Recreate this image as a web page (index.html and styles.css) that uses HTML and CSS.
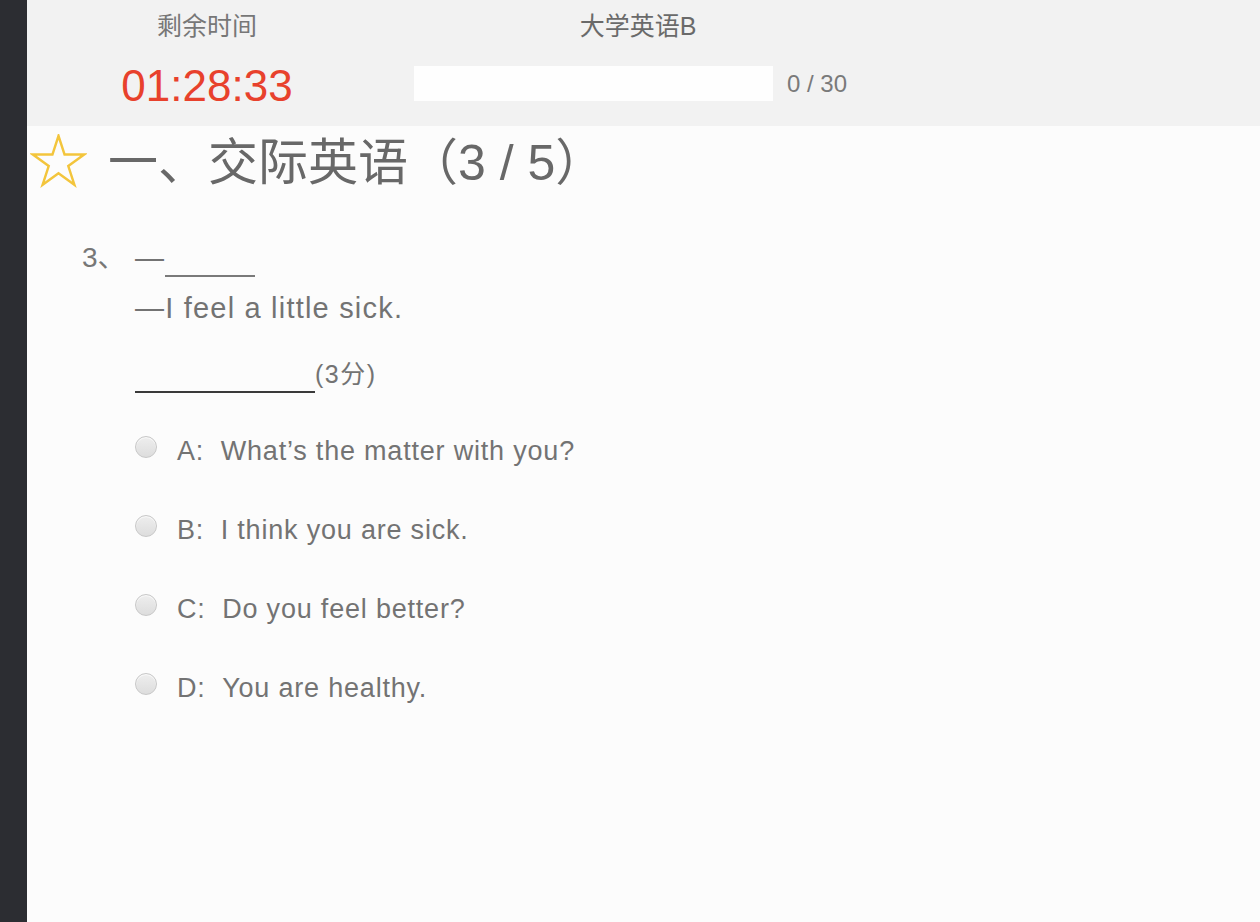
FILE: index.html
```html
<!DOCTYPE html>
<html lang="zh-CN">
<head>
<meta charset="utf-8">
<title>大学英语B</title>
<link rel="stylesheet" href="styles.css">
</head>
<body>
<div class="app">
  <aside class="sidebar"></aside>
  <main class="main">
    <header class="topbar">
      <div class="col col-timer">
        <div class="label">剩余时间</div>
        <div class="timer">01:28:33</div>
      </div>
      <div class="col col-title">
        <div class="label title">大学英语B</div>
        <div class="progress-row">
          <div class="progress"></div>
          <span class="count">0 / 30</span>
        </div>
      </div>
    </header>

    <section class="section">
      <h1 class="section-head">
        <svg class="star" width="57" height="54" viewBox="0 0 60 56" aria-hidden="true">
          <polygon points="30,1.6 36.38,21.22 57.01,21.22 40.32,33.35 46.69,52.98 30,40.85 13.31,52.98 19.68,33.35 2.99,21.22 23.62,21.22" fill="none" stroke="#f3c53c" stroke-width="2.6" stroke-linejoin="miter"/>
        </svg>
        <span class="head-text">一、交际英语（3 / 5）</span>
      </h1>

      <div class="question">
        <div class="q-num">3、</div>
        <div class="q-body">
          <div class="q-line">—<span class="blank-short"></span></div>
          <div class="q-line">—I feel a little sick.</div>
          <div class="answer-line">
            <div class="blank-long"></div>
            <span class="score">(3分)</span>
          </div>
          <ul class="options">
            <li class="option"><span class="radio"></span><span class="opt-text">A:&nbsp;&nbsp;What’s the matter with you?</span></li>
            <li class="option"><span class="radio"></span><span class="opt-text">B:&nbsp;&nbsp;I think you are sick.</span></li>
            <li class="option"><span class="radio"></span><span class="opt-text">C:&nbsp;&nbsp;Do you feel better?</span></li>
            <li class="option"><span class="radio"></span><span class="opt-text">D:&nbsp;&nbsp;You are healthy.</span></li>
          </ul>
        </div>
      </div>
    </section>
  </main>
</div>
</body>
</html>
```

FILE: styles.css
```css
* { box-sizing: border-box; }

html, body {
  margin: 0;
  padding: 0;
  height: 100%;
}

body {
  font-family: "Liberation Sans", "Noto Sans CJK SC", sans-serif;
  background: #fcfcfc;
  color: #737373;
}

.app {
  display: flex;
  min-height: 100vh;
}

.sidebar {
  width: 27px;
  flex: 0 0 27px;
  background: #2c2d32;
}

.main {
  flex: 1;
  background: #fcfcfc;
}

/* header */
.topbar {
  height: 126px;
  background: #f2f2f2;
  display: grid;
  grid-template-columns: 360px 448px;
  column-gap: 27px;
  padding-top: 11px;
}

.col {
  display: flex;
  flex-direction: column;
  align-items: center;
}

.label {
  font-size: 25px;
  line-height: 30px;
  color: #777;
}

.title {
  color: #6a6a6a;
}

.timer {
  margin-top: 20px;
  font-size: 44px;
  line-height: 50px;
  color: #e8412c;
}

.col-title {
  align-items: stretch;
}

.col-title .title {
  text-align: center;
}

.progress-row {
  display: flex;
  align-items: center;
  gap: 14px;
  margin-top: 25px;
}

.progress {
  width: 359px;
  height: 35px;
  background: #fefefe;
}

.count {
  font-size: 24px;
  line-height: 30px;
  color: #7a7a7a;
}

/* section */
.section {
  padding-top: 7px;
}

.section-head {
  margin: 0;
  display: flex;
  align-items: flex-start;
  gap: 21px;
  padding-left: 3px;
  height: 60px;
  font-weight: normal;
}

.star {
  display: block;
  flex: 0 0 57px;
  margin-top: 1px;
}

.head-text {
  font-size: 50px;
  line-height: 60px;
  color: #686868;
}

.question {
  display: grid;
  grid-template-columns: 53px 1fr;
  margin-left: 55px;
  margin-top: 40px;
  font-size: 29px;
  letter-spacing: 1.2px;
}

.q-num {
  font-size: 28px;
  line-height: 50px;
  color: #777;
  letter-spacing: 0;
}

.q-line {
  line-height: 50px;
  color: #737373;
  white-space: nowrap;
}

.blank-short {
  display: inline-block;
  width: 90px;
  height: 0;
  border-bottom: 2px solid #7a7a7a;
  vertical-align: -9px;
}

.answer-line {
  display: flex;
  align-items: flex-end;
  margin-top: 20px;
  height: 40px;
}

.blank-long {
  width: 180px;
  height: 40px;
  border-bottom: 2px solid #3a3a3a;
}

.score {
  font-size: 25px;
  line-height: 30px;
  margin-bottom: 4px;
  letter-spacing: 1.5px;
  color: #737373;
}

.options {
  list-style: none;
  margin: 18px 0 0;
  padding: 0;
}

.option {
  display: flex;
  align-items: center;
  height: 79px;
  letter-spacing: 0.8px;
}

.radio {
  width: 22px;
  height: 22px;
  flex: 0 0 22px;
  border-radius: 50%;
  border: 1px solid #c8c8c8;
  background: linear-gradient(#eeeeee, #dddddd);
  box-shadow: inset 0 1px 1px rgba(255, 255, 255, 0.8);
  margin-right: 20px;
  margin-bottom: 8px;
}

.opt-text {
  font-size: 27px;
  line-height: 32px;
  color: #737373;
  white-space: nowrap;
}
```
